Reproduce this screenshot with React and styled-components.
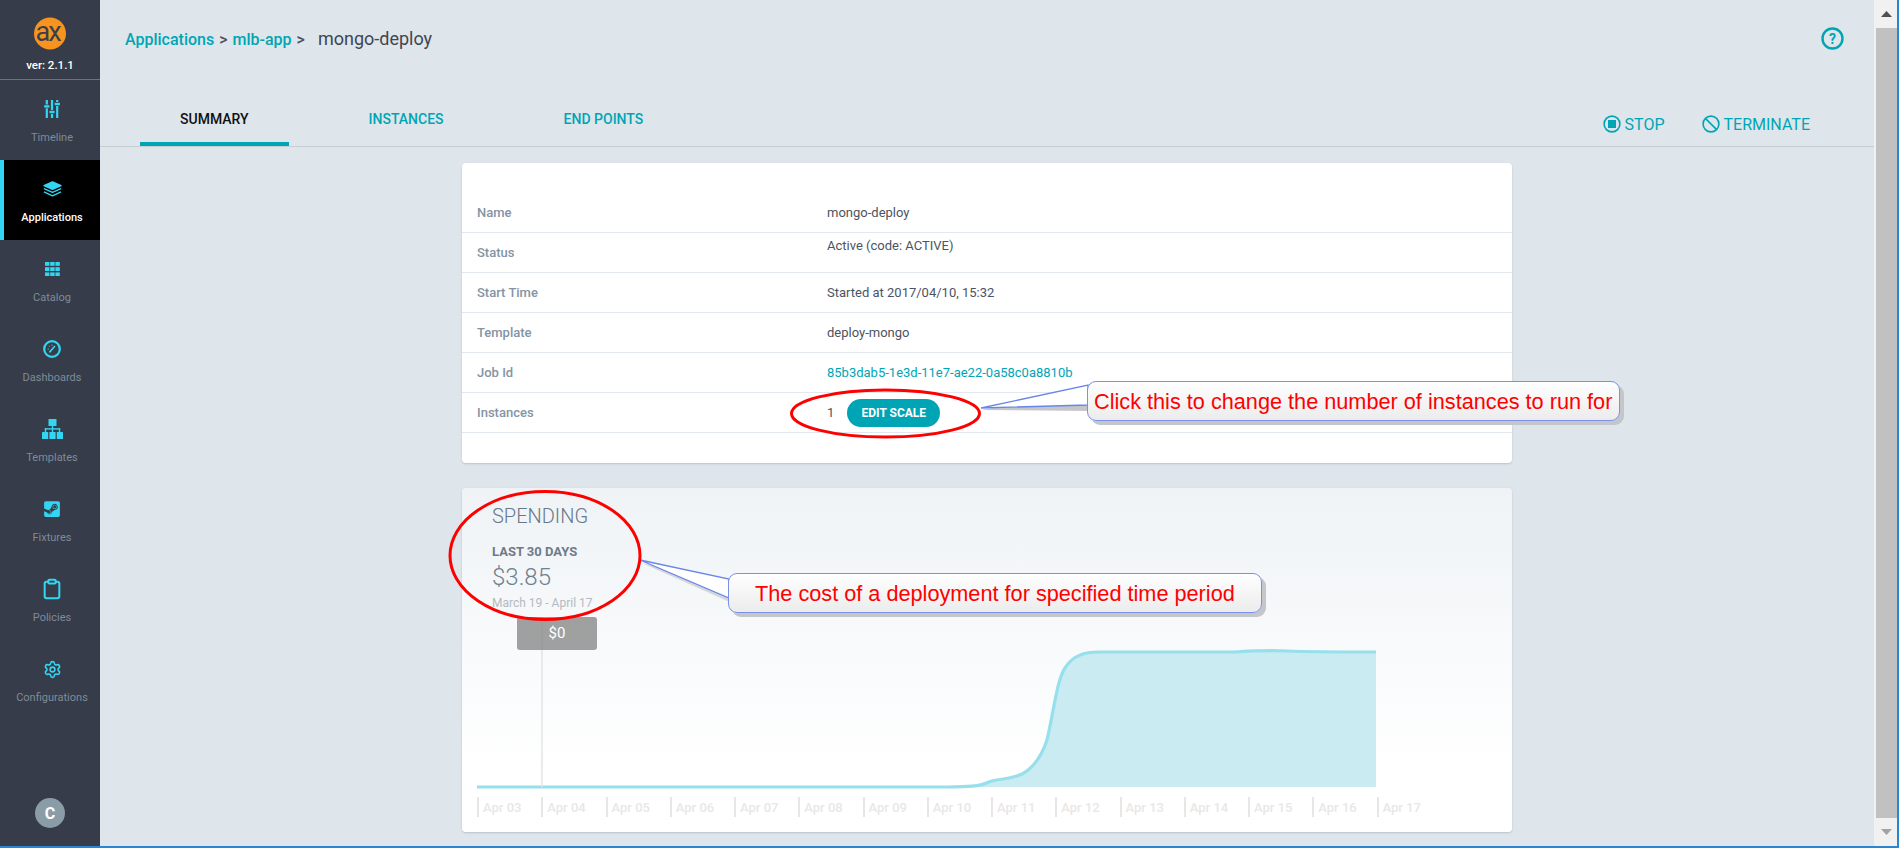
import React from 'react';
import styled, { createGlobalStyle } from 'styled-components';
import { Settings, Clipboard } from 'lucide-react';
import { FaSteamSquare } from 'react-icons/fa';

const Global = createGlobalStyle`
  html, body { margin: 0; padding: 0; height: 100%; overflow: hidden; }
  * { box-sizing: border-box; }
  body { font-family: Roboto, "Liberation Sans", sans-serif; }
`;

const TEAL = '#00a5b5';
const CYAN = '#33d6f2';

const Frame = styled.div`
  position: relative;
  display: flex;
  width: 1899px;
  height: 848px;
  overflow: hidden;
  background: #dee5eb;
  border-right: 2px solid #2a86d0;
  border-bottom: 2px solid #2a86d0;
`;

const Sidebar = styled.nav`
  display: flex;
  flex-direction: column;
  flex: 0 0 100px;
  background: #363c49;
`;
const Brand = styled.div`
  display: flex;
  flex-direction: column;
  align-items: center;
  height: 80px;
  padding-top: 17px;
  border-bottom: 1px solid #6f737b;
`;
const Version = styled.div`
  margin-top: 6px;
  color: #fff;
  font-size: 11.5px;
  font-weight: 500;
  line-height: 16px;
`;
const NavItem = styled.div`
  display: flex;
  flex-direction: column;
  align-items: center;
  height: 80px;
  padding-top: 19px;
  border-left: 4px solid ${p => (p.$active ? CYAN : 'transparent')};
  background: ${p => (p.$active ? '#000' : 'transparent')};
`;
const NavIcon = styled.div`
  display: flex;
  align-items: center;
  justify-content: center;
  height: 20px;
  color: ${CYAN};
`;
const NavLabel = styled.div`
  margin-top: 12px;
  font-size: 11px;
  line-height: 14px;
  font-weight: ${p => (p.$active ? 500 : 400)};
  color: ${p => (p.$active ? '#fff' : '#7f8b99')};
`;
const Avatar = styled.div`
  display: flex;
  align-items: center;
  justify-content: center;
  width: 30px;
  height: 30px;
  margin: auto auto 18px;
  border-radius: 50%;
  background: #8b9ca9;
  color: #fff;
  font-size: 16px;
  font-weight: 700;
`;

const Main = styled.main`
  display: flex;
  flex-direction: column;
  flex: 1;
  min-width: 0;
`;
const TopBar = styled.header`
  display: flex;
  align-items: center;
  justify-content: space-between;
  height: 79px;
  padding: 0 30px 2px 25px;
`;
const Crumbs = styled.div`
  display: flex;
  align-items: baseline;
  font-size: 16px;
  font-weight: 500;
  color: #4a5160;
`;
const CrumbLink = styled.span`
  color: ${TEAL};
`;
const Sep = styled.span`
  margin: 0 5px;
`;
const Current = styled.span`
  margin-left: 8px;
  font-size: 18px;
  font-weight: 400;
  color: #3f4553;
`;
const TabBar = styled.div`
  display: flex;
  align-items: stretch;
  justify-content: space-between;
  height: 68px;
  padding: 0 64px 0 40px;
  border-bottom: 1px solid #c6ced2;
`;
const Tabs = styled.div`
  display: flex;
  gap: 40px;
`;
const Tab = styled.div`
  display: flex;
  align-items: center;
  height: 67px;
  padding: 16px 40px 0;
  font-size: 14px;
  font-weight: 500;
  color: ${p => (p.$active ? '#111' : TEAL)};
  border-bottom: 4px solid ${p => (p.$active ? TEAL : 'transparent')};
`;
const Actions = styled.div`
  display: flex;
  align-items: center;
  gap: 37px;
  padding-top: 23px;
`;
const Action = styled.div`
  display: flex;
  align-items: center;
  gap: 4px;
  font-size: 16px;
  font-weight: 400;
  color: ${TEAL};
`;

const Content = styled.div`
  display: flex;
  flex-direction: column;
  align-items: center;
  gap: 25px;
  padding-top: 16px;
`;
const Card = styled.section`
  width: 1050px;
  border-radius: 4px;
  background: #fff;
  box-shadow: 0 1px 2px rgba(60, 70, 85, 0.22);
`;
const InfoCard = styled(Card)`
  height: 300px;
  padding-top: 30px;
`;
const Row = styled.div`
  display: grid;
  grid-template-columns: 350px 1fr;
  align-items: ${p => (p.$top ? 'start' : 'center')};
  height: 40px;
  padding-left: 15px;
  border-bottom: 1px solid #e2e8ee;
  font-size: 13px;
`;
const RowLabel = styled.div`
  align-self: center;
  font-weight: 500;
  color: #8494a4;
`;
const RowValue = styled.div`
  display: flex;
  align-items: center;
  color: #4c5361;
  padding-top: ${p => (p.$top ? '5px' : '0')};
`;
const JobLink = styled.span`
  color: ${TEAL};
`;
const ScaleButton = styled.button`
  height: 28px;
  width: 93px;
  margin-left: 13px;
  padding: 0;
  border: 0;
  border-radius: 14px;
  background: ${TEAL};
  color: #fff;
  font: 700 12px Roboto, sans-serif;
`;

const SpendCard = styled(Card)`
  height: 344px;
  padding: 17px 0 0 15px;
  background: linear-gradient(180deg, #eff3f6 0%, #ffffff 82%);
`;
const SpendHead = styled.div`
  display: flex;
  flex-direction: column;
  padding-left: 15px;
`;
const SpendTitle = styled.div`
  font-size: 20px;
  font-weight: 300;
  line-height: 22px;
  color: #66788a;
`;
const Period = styled.div`
  margin-top: 17px;
  font-size: 13px;
  font-weight: 700;
  line-height: 16px;
  color: #6d7b89;
`;
const Amount = styled.div`
  margin-top: 3px;
  font-size: 24px;
  font-weight: 300;
  line-height: 28px;
  color: #6f8090;
`;
const Range = styled.div`
  margin-top: 5px;
  font-size: 12px;
  line-height: 14px;
  color: #b3bac2;
`;
const ChartWrap = styled.div`
  position: relative;
  width: 1035px;
  height: 180px;
`;
const ChartTip = styled.div`
  position: absolute;
  left: 40px;
  top: 7px;
  width: 80px;
  height: 33px;
  border-radius: 3px;
  background: rgba(130, 130, 130, 0.75);
  color: #fff;
  font-size: 15px;
  line-height: 32px;
  text-align: center;
`;
const Axis = styled.div`
  display: flex;
  margin-top: 7px;
`;
const Tick = styled.div`
  flex: 0 0 64.25px;
  height: 20px;
  padding-left: 4px;
  border-left: 2px solid #e7e7e7;
  font-size: 13px;
  font-weight: 500;
  line-height: 21px;
  color: #e9e7e7;
  white-space: nowrap;
`;

const Overlay = styled.svg`
  position: absolute;
  left: 0;
  top: 0;
  pointer-events: none;
`;
const Callout = styled.div`
  position: absolute;
  display: flex;
  align-items: center;
  left: ${p => p.$x}px;
  top: ${p => p.$y}px;
  width: ${p => p.$w}px;
  height: 40px;
  padding: 2px 0 0 ${p => p.$pad}px;
  border: 1.5px solid #7a90ea;
  border-radius: 9px;
  background: linear-gradient(180deg, #ffffff 0%, #ececec 100%);
  box-shadow: 4px 4px 0 #c4c6ca;
  color: #ff0000;
  font-family: "Liberation Sans", Arial, sans-serif;
  font-size: 21.7px;
  white-space: nowrap;
`;

const Scrollbar = styled.div`
  display: flex;
  flex-direction: column;
  flex: 0 0 23px;
  background: #f1f1f1;
`;
const ScrollBtn = styled.div`
  display: flex;
  align-items: center;
  justify-content: center;
  height: 28px;
  padding-left: 2px;
`;
const ScrollThumb = styled.div`
  flex: 1;
  margin-left: 2px;
  background: #c1c1c1;
`;

const Logo = () => (
  <svg width="34" height="34" viewBox="0 0 34 34">
    <circle cx="17" cy="16.5" r="16" fill="#f7931e" />
    <text x="2.5" y="24" fontFamily="Roboto, sans-serif" fontSize="27" fontWeight="400" fill="#3a3f4c" letterSpacing="-2">ax</text>
  </svg>
);
const IconTimeline = () => (
  <svg width="16" height="18" viewBox="0 0 16 18" fill="currentColor">
    <rect x="1.7" y="0" width="2.2" height="4.5" /><rect x="0.2" y="5.2" width="5.2" height="2.4" /><rect x="1.7" y="8.3" width="2.2" height="9.7" />
    <rect x="6.9" y="0" width="2.2" height="10" /><rect x="5.5" y="10.8" width="5" height="2.4" /><rect x="6.9" y="14" width="2.2" height="4" />
    <rect x="12.1" y="0" width="2.2" height="2" /><rect x="10.7" y="2.8" width="5.2" height="2.4" /><rect x="12.1" y="6" width="2.2" height="12" />
  </svg>
);
const IconLayers = () => (
  <svg width="19" height="16" viewBox="0 0 19 16" fill="none" stroke="currentColor" strokeWidth="1.4" strokeLinejoin="round">
    <path d="M9.5 0.8 L18 4.6 L9.5 8.4 L1 4.6 Z" fill="currentColor" />
    <path d="M1 7.6 L9.5 11.4 L18 7.6" />
    <path d="M1 10.8 L9.5 14.8 L18 10.8" />
  </svg>
);
const IconGrid = () => (
  <svg width="15" height="14" viewBox="0 0 15 14" fill="currentColor">
    {[0, 5.2, 10.4].map(y => [0, 5.2, 10.4].map(x => <rect key={`${x}-${y}`} x={x} y={y} width="4.4" height="3.8" />))}
  </svg>
);
const IconGauge = () => (
  <svg width="18" height="18" viewBox="0 0 18 18" fill="none" stroke="currentColor">
    <circle cx="9" cy="9" r="7.8" strokeWidth="2.2" />
    <path d="M6.4 12.4 L12 6" strokeWidth="1.6" />
    <path d="M4.6 9h1.3M9 4.6v1.3M5.9 5.9l.9.9" strokeWidth="1" />
  </svg>
);
const IconSitemap = () => (
  <svg width="21" height="20" viewBox="0 0 21 20" fill="currentColor">
    <rect x="6.5" y="0" width="8" height="7" rx="0.6" />
    <rect x="9.8" y="7" width="1.4" height="6" />
    <rect x="2.8" y="9.2" width="15.4" height="1.4" />
    <rect x="2.8" y="9.2" width="1.4" height="4" />
    <rect x="16.8" y="9.2" width="1.4" height="4" />
    <rect x="0" y="13" width="6.2" height="7" rx="0.6" />
    <rect x="7.4" y="13" width="6.2" height="7" rx="0.6" />
    <rect x="14.8" y="13" width="6.2" height="7" rx="0.6" />
  </svg>
);
const IconHelp = () => (
  <svg width="23" height="23" viewBox="0 0 23 23">
    <circle cx="11.5" cy="11.5" r="10" fill="none" stroke={TEAL} strokeWidth="2.4" />
    <text x="11.5" y="16.5" textAnchor="middle" fontFamily="Roboto, sans-serif" fontWeight="700" fontSize="14" fill={TEAL}>?</text>
  </svg>
);
const IconStop = () => (
  <svg width="18" height="18" viewBox="0 0 18 18">
    <circle cx="9" cy="9" r="7.9" fill="none" stroke={TEAL} strokeWidth="1.6" />
    <rect x="5" y="5" width="8" height="8" fill={TEAL} />
  </svg>
);
const IconBan = () => (
  <svg width="18" height="18" viewBox="0 0 18 18" fill="none" stroke={TEAL} strokeWidth="1.6">
    <circle cx="9" cy="9" r="7.9" />
    <path d="M3.4 3.4 L14.6 14.6" />
  </svg>
);

const nav = [
  ['Timeline', <IconTimeline />],
  ['Applications', <IconLayers />, true],
  ['Catalog', <IconGrid />],
  ['Dashboards', <IconGauge />],
  ['Templates', <IconSitemap />],
  ['Fixtures', <FaSteamSquare size={18} />],
  ['Policies', <Clipboard size={22} strokeWidth={2.2} />],
  ['Configurations', <Settings size={19} strokeWidth={2} />],
];

const rows = [
  ['Name', 'mongo-deploy'],
  ['Status', 'Active (code: ACTIVE)', true],
  ['Start Time', 'Started at 2017/04/10, 15:32'],
  ['Template', 'deploy-mongo'],
  ['Job Id', <JobLink>85b3dab5-1e3d-11e7-ae22-0a58c0a8810b</JobLink>],
  ['Instances', <>1<ScaleButton>EDIT SCALE</ScaleButton></>],
];

const days = Array.from({ length: 15 }, (_, i) => `Apr ${String(i + 3).padStart(2, '0')}`);

const curve = 'M0 177 L470 177 C490 177 503 176.5 512 172 C520 168.5 533 170 545 164 C558 157 565 145 570 130 C577 100 580 70 588 58 C596 45 608 42 622 42 L756 42 C775 41 790 40 810 41 C830 42 850 42 899 42';

export default function App() {
  return (
    <Frame>
      <Global />
      <Sidebar>
        <Brand>
          <Logo />
          <Version>ver: 2.1.1</Version>
        </Brand>
        {nav.map(([label, icon, active]) => (
          <NavItem key={label} $active={active}>
            <NavIcon>{icon}</NavIcon>
            <NavLabel $active={active}>{label}</NavLabel>
          </NavItem>
        ))}
        <Avatar>C</Avatar>
      </Sidebar>
      <Main>
        <TopBar>
          <Crumbs>
            <CrumbLink>Applications</CrumbLink><Sep>&gt;</Sep>
            <CrumbLink>mlb-app</CrumbLink><Sep>&gt;</Sep>
            <Current>mongo-deploy</Current>
          </Crumbs>
          <IconHelp />
        </TopBar>
        <TabBar>
          <Tabs>
            <Tab $active>SUMMARY</Tab>
            <Tab>INSTANCES</Tab>
            <Tab>END POINTS</Tab>
          </Tabs>
          <Actions>
            <Action><IconStop />STOP</Action>
            <Action><IconBan />TERMINATE</Action>
          </Actions>
        </TabBar>
        <Content>
          <InfoCard>
            {rows.map(([label, value, top]) => (
              <Row key={label} $top={top}>
                <RowLabel>{label}</RowLabel>
                <RowValue $top={top}>{value}</RowValue>
              </Row>
            ))}
          </InfoCard>
          <SpendCard>
            <SpendHead>
              <SpendTitle>SPENDING</SpendTitle>
              <Period>LAST 30 DAYS</Period>
              <Amount>$3.85</Amount>
              <Range>March 19 - April 17</Range>
            </SpendHead>
            <ChartWrap>
              <svg width="1035" height="180" viewBox="0 0 1035 180">
                <path d={`${curve} L899 177 Z`} fill="#c9ebf1" />
                <path d={curve} fill="none" stroke="#96e0ec" strokeWidth="3.2" />
                <line x1="65" y1="7" x2="65" y2="177" stroke="#e2e4e6" strokeWidth="1.5" />
              </svg>
              <ChartTip>$0</ChartTip>
            </ChartWrap>
            <Axis>
              {days.map(d => <Tick key={d}>{d}</Tick>)}
            </Axis>
          </SpendCard>
        </Content>
      </Main>
      <Scrollbar>
        <ScrollBtn>
          <svg width="11" height="6" viewBox="0 0 11 6"><path d="M5.5 0 L11 6 L0 6 Z" fill="#505050" /></svg>
        </ScrollBtn>
        <ScrollThumb />
        <ScrollBtn>
          <svg width="11" height="6" viewBox="0 0 11 6"><path d="M0 0 L11 0 L5.5 6 Z" fill="#a3a3a3" /></svg>
        </ScrollBtn>
      </Scrollbar>
      <Overlay width="1899" height="848" viewBox="0 0 1899 848">
        <path d="M981 410 L1092 392 L1092 411 Z" fill="#c4c6ca" />
        <path d="M981 408 L1088 385 L1088 405 Z" fill="#fff" stroke="#6a86ea" strokeWidth="1.3" />
        <path d="M642 563 L732 603 L732 584 Z" fill="#c4c6ca" opacity="0.7" />
        <path d="M640 560 L729 579 L729 598 Z" fill="#fff" stroke="#6a86ea" strokeWidth="1.3" />
        <ellipse cx="885.5" cy="413.5" rx="94" ry="23.5" fill="none" stroke="#f00" strokeWidth="3" />
        <ellipse cx="545" cy="555.5" rx="95" ry="64" fill="none" stroke="#f00" strokeWidth="3" />
      </Overlay>
      <Callout $x={1087} $y={381} $w={533} $pad={6}>Click this to change the number of instances to run for</Callout>
      <Callout $x={728} $y={573} $w={534} $pad={26}>The cost of a deployment for specified time period</Callout>
    </Frame>
  );
}
